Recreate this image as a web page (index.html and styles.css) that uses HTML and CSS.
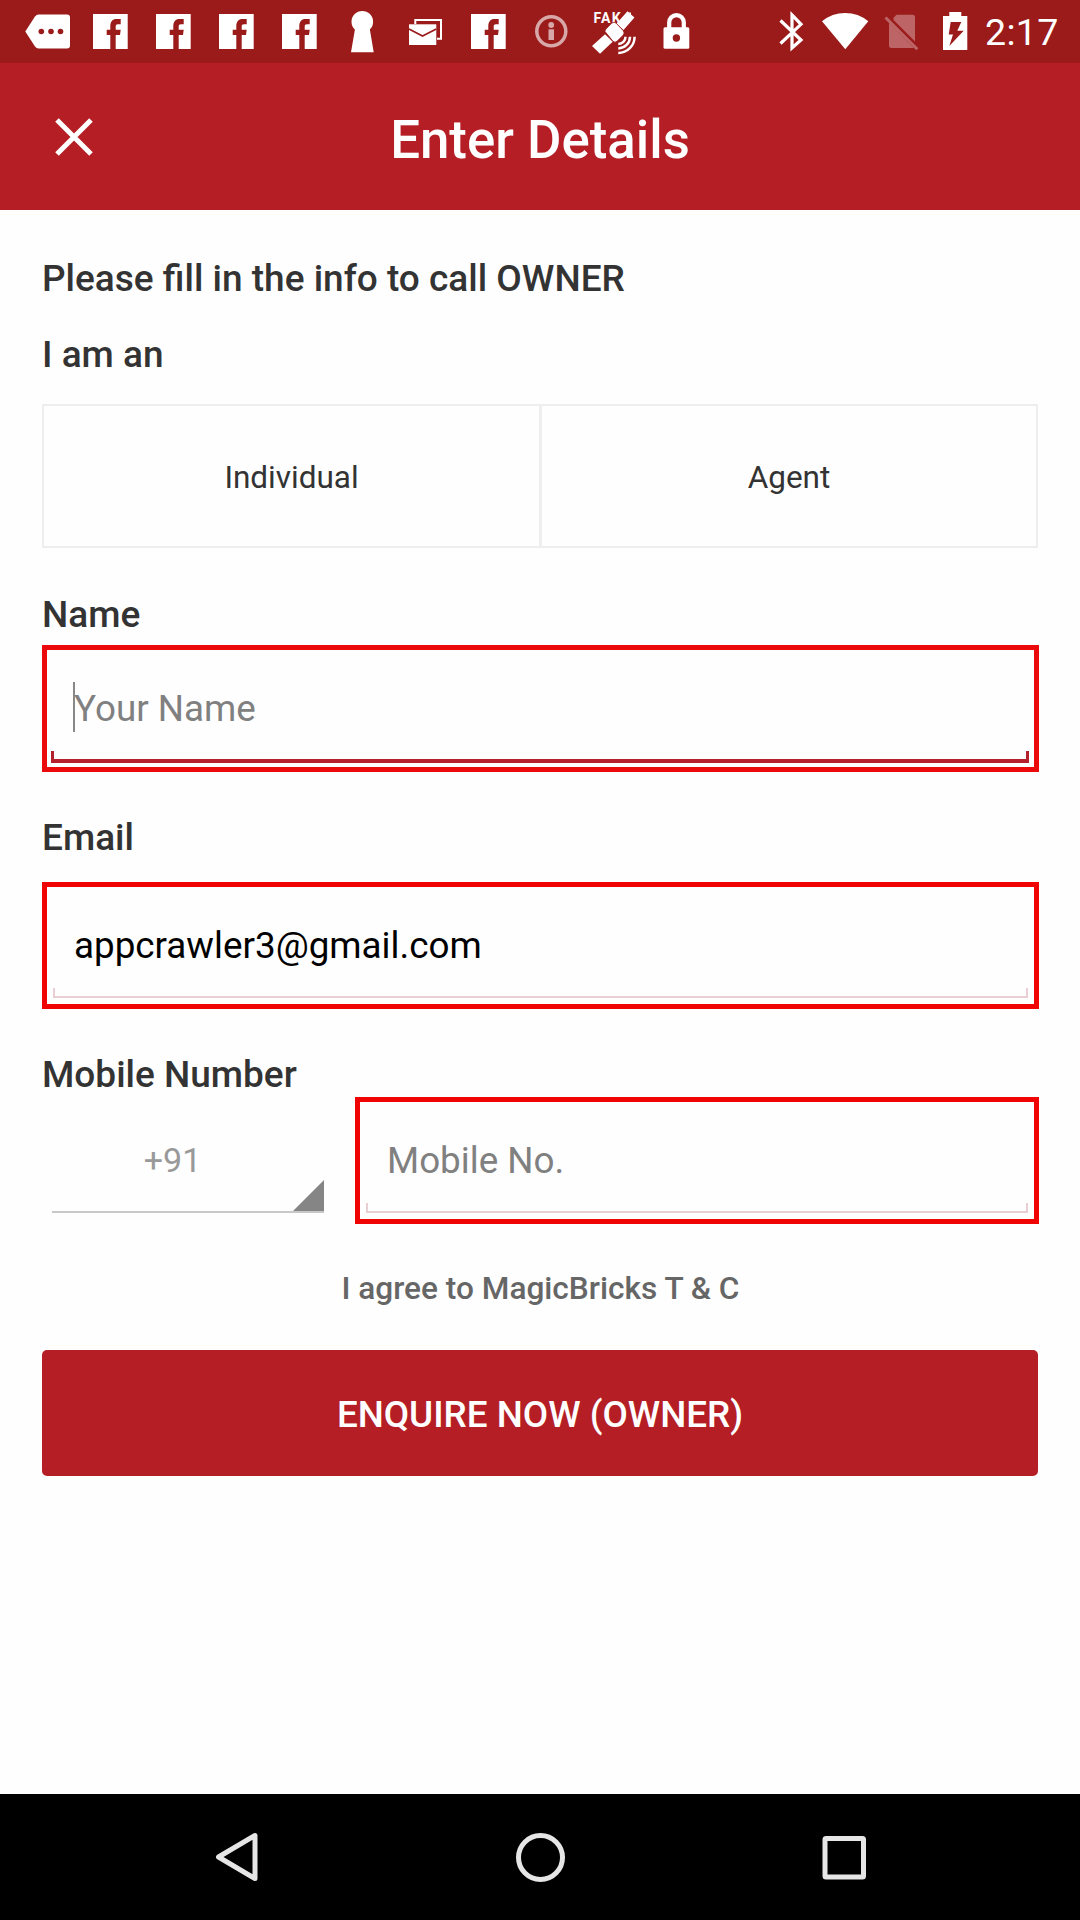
FILE: index.html
```html
<!DOCTYPE html>
<html lang="en">
<head>
<meta charset="utf-8">
<title>Enter Details</title>
<link rel="stylesheet" href="styles.css">
</head>
<body>
<svg class="defs" width="0" height="0" aria-hidden="true">
  <symbol id="facebook" viewBox="0 0 63 63">
    <path fill-rule="evenodd" d="M14 14H48.7V49H36.7V35H41L41.7 29.8H36.7V26.8C36.7 25 37.3 24.3 39 24.3H41.7V19H37.5C33.5 19 31.3 21.5 31.3 26.5V29.8H27.7V35H31.3V49H14Z"/>
  </symbol>
</svg>
<div class="screen">
  <div class="status-bar">
    <div class="notifications">
      <svg viewBox="0 0 63 63"><path d="M22.5 14.5H51Q54 14.5 54 17.500V45.500Q54 48.500 51 48.500H22.500Q20.500 48.500 19 46.500L9.300 31.500L19 16.500Q20.500 14.500 22.500 14.500Z"/><g class="cut"><circle cx="25.300" cy="31.500" r="2.800"/><circle cx="35" cy="31.500" r="2.800"/><circle cx="44.500" cy="31.500" r="2.800"/></g></svg>
      <svg><use href="#facebook"/></svg>
      <svg><use href="#facebook"/></svg>
      <svg><use href="#facebook"/></svg>
      <svg><use href="#facebook"/></svg>
      <svg viewBox="0 0 63 63"><circle cx="31.300" cy="21.700" r="10.800"/><path d="M24.500 26H38.300L42.700 52.300H20Z"/></svg>
      <svg viewBox="0 0 63 63"><path class="line" stroke-width="2" d="M21.300 24V20H47V38.700H43"/><path d="M15 24.300H42.300V45H15Z"/><path class="cut-line" d="M15 29L28.500 36L42.300 29"/></svg>
      <svg><use href="#facebook"/></svg>
      <svg class="faded" viewBox="0 0 63 63"><circle class="line" stroke-width="3.500" cx="31.300" cy="31.300" r="14.500"/><circle cx="31.200" cy="25" r="2.900"/><path d="M28.500 29.300H34V40H28.500Z"/></svg>
      <svg viewBox="0 0 63 63"><text class="fake" x="10.500" y="23">FAK</text><path d="M33.500 23.500L44.500 11.300L46 12.500L48 12.500L48 14.500L51.500 17.500L40.500 30Z"/><path d="M9 46L22 34.300L29.700 41.700L17 53.700Z"/><path class="edged" d="M22 31.500Q21.700 30 23.500 28.500L28.500 23.300Q31 21.500 33 23L40.300 30.700Q42 33 40.300 35L34 41.300Q32 43 30 41.300Z"/><path class="line" stroke-width="2.500" d="M42.500 36.700A7.200 7.200 0 0 1 35.300 43.900M47 36.700A11.700 11.700 0 0 1 35.300 48.400M51.600 36.700A16.300 16.300 0 0 1 35.300 53"/></svg>
      <svg viewBox="0 0 63 63"><path class="line" stroke-width="4.200" d="M23.200 29V22.500A7.300 7.300 0 0 1 37.800 22.500V29"/><rect x="17.500" y="27.300" width="25.800" height="21.400" rx="1.500"/><circle class="cut" cx="30.400" cy="38" r="3.700"/></svg>
    </div>
    <div class="system">
      <svg class="bluetooth" viewBox="0 0 54 63"><path class="line" stroke-width="3.200" d="M16.500 20.500L37 40L28 48V15L37 24.300L16.500 43.500"/></svg>
      <svg class="wifi" viewBox="0 0 54 63"><path d="M4 21.300Q14 13 27.200 13T50.300 21.300L27.300 49.300Z"/></svg>
      <svg class="sim" viewBox="0 0 58 63"><path d="M24.500 14.700H40.500Q43 14.700 43 17.500V41.500L21.500 20V17.700ZM17 22.500L42 48H19.500Q17 48 17 45.500Z"/><path class="line" stroke-width="3" d="M13.500 17.500L45.300 49.300"/></svg>
      <svg class="battery" viewBox="0 0 50 63"><path d="M19.300 12H31.300V16H37.300V50H13V16H19.300Z"/><path class="cut" d="M20.700 22H31.300L27.300 30.700H33.700L19.300 46L23 34.500H18.700Z"/></svg>
      <span class="clock">2:17</span>
    </div>
  </div>

  <header class="app-bar">
    <svg class="close" viewBox="0 0 40 40"><path d="M3 3L37 37M37 3L3 37"/></svg>
    <h1>Enter Details</h1>
  </header>

  <main class="form">
    <p class="label intro">Please fill in the info to call OWNER</p>
    <p class="label who">I am an</p>
    <div class="toggle">
      <div class="option">Individual</div>
      <div class="option">Agent</div>
    </div>

    <p class="label name-label">Name</p>
    <div class="field focused">
      <input type="text" placeholder="Your Name">
      <span class="caret"></span>
      <span class="underline"></span>
    </div>

    <p class="label email-label">Email</p>
    <div class="field">
      <input type="text" value="appcrawler3@gmail.com">
      <span class="underline"></span>
    </div>

    <p class="label mobile-label">Mobile Number</p>
    <div class="mobile-row">
      <div class="country"><span>+91</span><svg viewBox="0 0 31 31"><path d="M31 0V31H0Z"/></svg></div>
      <div class="field">
        <input type="text" placeholder="Mobile No.">
        <span class="underline"></span>
      </div>
    </div>

    <p class="terms">I agree to MagicBricks T &amp; C</p>
    <button class="submit">ENQUIRE NOW (OWNER)</button>
  </main>

  <nav class="nav-bar">
    <svg viewBox="0 0 60 60"><path d="M48 8.500V51.500L11.500 30Z"/></svg>
    <svg viewBox="0 0 60 60"><circle cx="29.500" cy="30.500" r="22"/></svg>
    <svg viewBox="0 0 60 60"><rect x="11" y="11.500" width="38.500" height="38.500" rx="1"/></svg>
  </nav>
</div>
</body>
</html>
```

FILE: styles.css
```css
* { box-sizing: border-box; }

body {
  margin: 0;
  background: #fefefe;
  font-family: Roboto, "Liberation Sans", sans-serif;
}

p, h1 { margin: 0; }

.defs { display: block; }

.screen {
  display: flex;
  flex-direction: column;
  width: 1080px;
  height: 1920px;
  overflow: hidden;
}

/* Status bar */
.status-bar {
  display: flex;
  justify-content: space-between;
  height: 63px;
  padding: 0 21px 0 16px;
  background: #9a1b1a;
  color: #fff;
}

.status-bar svg { display: block; height: 63px; fill: #fff; }
.notifications, .system { display: flex; }
.notifications svg { width: 63px; }
.system .bluetooth, .system .wifi { width: 54px; }
.system .sim { width: 58px; fill: #bd6466; }
.system .sim .line { stroke: #bd6466; }
.system .battery { width: 50px; }
.status-bar .line { fill: none; stroke: #fff; }
.status-bar .cut { fill: #9a1b1a; }
.status-bar .cut-line { fill: none; stroke: #9a1b1a; stroke-width: 1.6; }
.status-bar .edged { stroke: #9a1b1a; stroke-width: 0.8; }
.status-bar .faded { opacity: 0.62; }
.fake { font-size: 14px; font-weight: 700; letter-spacing: 1.2px; }

.clock {
  width: 79px;
  padding-left: 5px;
  font-size: 37.5px;
  font-weight: 400;
  line-height: 65px;
  letter-spacing: 0.3px;
  white-space: nowrap;
}

/* Title bar */
.app-bar {
  display: grid;
  grid-template-columns: 100px 1fr 100px;
  align-items: center;
  height: 147px;
  padding: 0 3px;
  background: #b41e24;
  color: #fff;
}

.close {
  justify-self: end;
  width: 40px;
  height: 40px;
  margin-right: 9.5px;
  fill: none;
  stroke: #fff;
  stroke-width: 5;
}

.app-bar h1 {
  padding-top: 6px;
  font-size: 52.8px;
  font-weight: 500;
  line-height: 60px;
  text-align: center;
}

/* Form */
.form {
  display: flex;
  flex: 1;
  flex-direction: column;
  padding: 0 41px 0 42px;
}

.label {
  color: #333;
  font-size: 37px;
  font-weight: 500;
  line-height: 40px;
}

.intro { margin-top: 49px; }
.who { margin-top: 36px; }

.toggle {
  display: grid;
  grid-template-columns: 495px 1fr;
  height: 144px;
  margin: 29px 1px 0 0;
  border: 2px solid #eee;
}

.option {
  padding-top: 3px;
  color: #333;
  font-size: 31.5px;
  line-height: 137px;
  text-align: center;
}

.option + .option { border-left: 3px solid #eee; }

.name-label { margin: 47px 0 10px; }
.email-label { margin: 46px 0 24px; }
.mobile-label { margin: 46px 0 2px; }

.field {
  position: relative;
  display: flex;
  height: 127px;
  border: 5px solid #f00303;
}

.field.focused { border-color: #ea090b; }

.field input {
  width: 100%;
  padding: 0 27px;
  border: 0;
  outline: 0;
  background: transparent;
  color: #000;
  font: 400 36.8px/42px Roboto, "Liberation Sans", sans-serif;
}

.field input::placeholder { color: #808080; opacity: 1; }

.underline {
  position: absolute;
  right: 6px;
  bottom: 6px;
  left: 6px;
  height: 10px;
  border: 2px solid #e9ced4;
  border-top: 0;
}

.focused .underline {
  right: 5px;
  bottom: 4px;
  left: 4px;
  height: 12px;
  border-color: #b4202b;
  border-width: 0 3px 4px;
}

.caret {
  position: absolute;
  top: 32px;
  left: 26px;
  width: 2px;
  height: 50px;
  background: #888;
}

.mobile-row {
  display: grid;
  grid-template-columns: 272px 684px;
  justify-content: end;
  column-gap: 31px;
}

.country {
  display: flex;
  align-items: center;
  justify-content: flex-end;
  height: 116px;
  border-bottom: 2px solid #c8c8c8;
}

.country span {
  flex: 1;
  padding-top: 12px;
  color: #999;
  font-size: 34px;
  text-align: center;
}

.country svg {
  align-self: flex-end;
  width: 31px;
  height: 31px;
  fill: #858585;
}

.terms {
  margin-top: 45px;
  color: #666;
  font-size: 31.6px;
  font-weight: 500;
  line-height: 40px;
  text-align: center;
}

.submit {
  height: 126px;
  margin: 41px 1px 0 0;
  padding: 4px 0 0;
  border: 0;
  border-radius: 5px;
  background: #b41e24;
  color: #fff;
  font: 500 36.8px/42px Roboto, "Liberation Sans", sans-serif;
}

/* System navigation */
.nav-bar {
  display: flex;
  justify-content: space-between;
  align-items: center;
  height: 126px;
  padding: 0 206px 0 207px;
  background: #000;
}

.nav-bar svg {
  width: 60px;
  height: 60px;
  fill: none;
  stroke: #e6e6e6;
  stroke-width: 5;
  stroke-linejoin: round;
}
```
